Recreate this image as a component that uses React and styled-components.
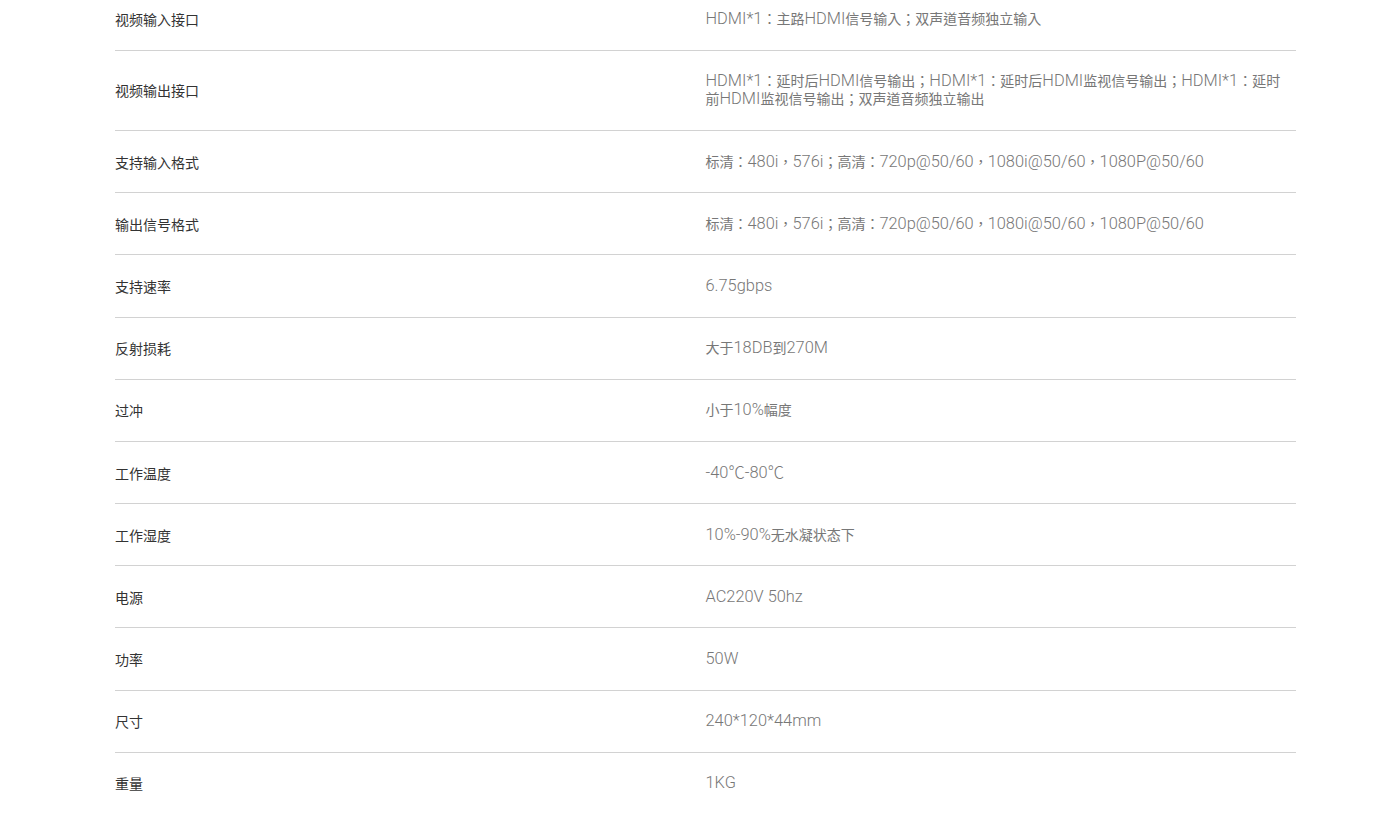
import React from 'react';
import styled, { createGlobalStyle } from 'styled-components';

const GlobalStyle = createGlobalStyle`
  html, body {
    margin: 0;
    padding: 0;
    background: #fff;
  }
  body {
    font-family: 'Roboto', 'Noto Sans CJK SC', sans-serif;
    overflow: hidden;
  }
`;

const SpecTable = styled.div`
  width: 1181px;
  margin: -11.4px 0 0 115px;
`;

const Row = styled.div`
  display: grid;
  grid-template-columns: 1fr 1fr;
  align-items: center;
  padding: 21.6px 0;
  line-height: 18px;
  border-bottom: 1px solid #d2d2d2;

  &:last-child {
    border-bottom: none;
  }
`;

const Label = styled.div`
  font-family: 'Noto Sans CJK SC', sans-serif;
  font-size: 14px;
  color: #333;
`;

const Value = styled.div`
  font-family: 'Roboto', 'Noto Sans CJK TC', sans-serif;
  font-weight: 300;
  font-size: 16.4px;
  color: #777;
  padding-right: 8px;
`;

// the chinese runs in the value column are set smaller than the latin ones
const Han = styled.span`
  font-family: 'Noto Sans CJK TC', sans-serif;
  font-weight: 400;
  font-size: 14px;
  line-height: 1;
`;

const HAN_RE = /([\u3000-\u303f\u4e00-\u9fff\uff00-\uffef]+)/;

const renderValue = (text) =>
  text.split(HAN_RE).map((part, i) =>
    i % 2 === 1 ? <Han key={i}>{part}</Han> : part
  );

const specs = [
  ['视频输入接口', 'HDMI*1：主路HDMI信号输入；双声道音频独立输入'],
  ['视频输出接口', 'HDMI*1：延时后HDMI信号输出；HDMI*1：延时后HDMI监视信号输出；HDMI*1：延时前HDMI监视信号输出；双声道音频独立输出'],
  ['支持输入格式', '标清：480i，576i；高清：720p@50/60，1080i@50/60，1080P@50/60'],
  ['输出信号格式', '标清：480i，576i；高清：720p@50/60，1080i@50/60，1080P@50/60'],
  ['支持速率', '6.75gbps'],
  ['反射损耗', '大于18DB到270M'],
  ['过冲', '小于10%幅度'],
  ['工作温度', '-40℃-80℃'],
  ['工作湿度', '10%-90%无水凝状态下'],
  ['电源', 'AC220V 50hz'],
  ['功率', '50W'],
  ['尺寸', '240*120*44mm'],
  ['重量', '1KG'],
];

export default function App() {
  return (
    <>
      <GlobalStyle />
      <SpecTable>
        {specs.map(([label, value]) => (
          <Row key={label}>
            <Label>{label}</Label>
            <Value>{renderValue(value)}</Value>
          </Row>
        ))}
      </SpecTable>
    </>
  );
}
